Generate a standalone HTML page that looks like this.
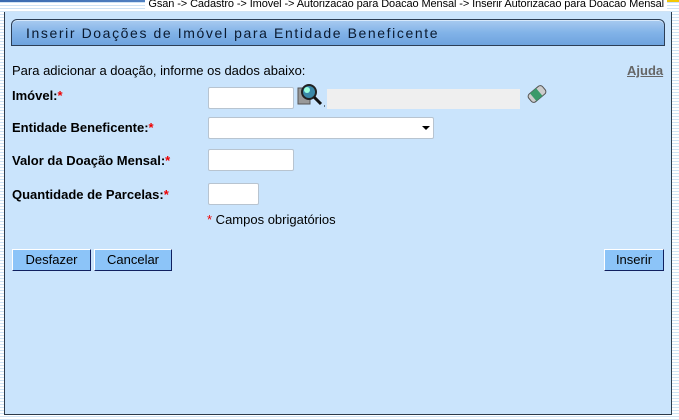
<!DOCTYPE html>
<html><head><meta charset="utf-8"><style>
body{margin:0;width:679px;height:420px;overflow:hidden;font-family:"Liberation Sans",Arial,sans-serif;font-size:12px;color:#000;
background:repeating-linear-gradient(#fff 0 2px,#cfe3f5 2px 3px);}
.crumb{position:absolute;right:12px;top:-1px;font-size:11px;line-height:11px;background:#fff;padding:0 3px;letter-spacing:-0.1px}
.topline{position:absolute;left:0;top:0;width:679px;height:2px;background:linear-gradient(90deg,#3a6ab0,#7aa8e0 60%,#f5c800)}
.panel{position:absolute;left:4px;top:12px;width:666px;height:402px;background:#cae4fc;border:1px solid #2c3a4a;border-top:none}
.title{position:absolute;left:6px;top:7px;width:652px;height:25px;border:1px solid #2c3e56;border-radius:6px 6px 0 0;
background:linear-gradient(#a9cbf0,#82b3e8 50%,#6ea3de);box-shadow:inset 0 1px 0 #d6e8fb;}
.title span{position:absolute;left:14px;top:5px;font-size:14px;letter-spacing:1.6px;color:#0a1a30}
.abs{position:absolute}
.lbl{font-weight:bold;font-size:13px}
.r{color:#e00}
.inp{position:absolute;background:#fff;border:1px solid #b8c4d0;border-radius:2px;height:22px;box-sizing:border-box}
.btn{position:absolute;height:22px;box-sizing:border-box;background:#8cc4f8;border:1px solid;border-color:#fff #102060 #102060 #fff;font-size:13px;text-align:center;line-height:20px}
</style></head><body>
<div class="topline"></div>
<div class="panel">
<div class="title"><span>Inserir Doações de Imóvel para Entidade Beneficente</span></div>
<div class="abs" style="left:7px;top:51px;font-size:13px">Para adicionar a doação, informe os dados abaixo:</div>
<div class="abs" style="left:622px;top:51px;font-size:13px;font-weight:bold;color:#666;text-decoration:underline">Ajuda</div>
<div class="abs lbl" style="left:7px;top:76px">Imóvel:<span class="r">*</span></div>
<div class="inp" style="left:203px;top:75px;width:86px"></div>
<svg class="abs" style="left:292px;top:71px" width="28" height="24" viewBox="0 0 28 24">
<rect x="1" y="5" width="12" height="16" fill="#999" stroke="#555"/>
<circle cx="12" cy="9" r="7" fill="#3a88a8" stroke="#222" stroke-width="2"/>
<circle cx="10" cy="7" r="3" fill="#9fd"/>
<line x1="17" y1="14" x2="24" y2="21" stroke="#111" stroke-width="3"/>
<line x1="27" y1="23" x2="28" y2="23" stroke="#000"/>
</svg>
<div class="abs" style="left:322px;top:77px;width:193px;height:20px;background:#efefef"></div>
<svg class="abs" style="left:520px;top:70px" width="24" height="24" viewBox="0 0 24 24">
<g transform="rotate(-40 12 12)"><rect x="3" y="7" width="18" height="10" rx="3" fill="#ccc" stroke="#555"/><rect x="7" y="7" width="8" height="10" fill="#3a9a6a"/></g>
</svg>
<div class="abs lbl" style="left:7px;top:108px">Entidade Beneficente:<span class="r">*</span></div>
<div class="inp" style="left:203px;top:105px;width:226px"></div>
<div class="abs" style="left:417px;top:114px;width:0;height:0;border-left:4px solid transparent;border-right:4px solid transparent;border-top:4px solid #000"></div>
<div class="abs lbl" style="left:7px;top:141px">Valor da Doação Mensal:<span class="r">*</span></div>
<div class="inp" style="left:203px;top:137px;width:86px"></div>
<div class="abs lbl" style="left:7px;top:175px">Quantidade de Parcelas:<span class="r">*</span></div>
<div class="inp" style="left:203px;top:171px;width:51px"></div>
<div class="abs" style="left:202px;top:200px;font-size:13px"><span class="r">*</span> Campos obrigatórios</div>
<div class="btn" style="left:7px;top:237px;width:79px">Desfazer</div>
<div class="btn" style="left:89px;top:237px;width:78px">Cancelar</div>
<div class="btn" style="left:599px;top:237px;width:60px">Inserir</div>
</div>
<div class="crumb">Gsan -&gt; Cadastro -&gt; Imovel -&gt; Autorizacao para Doacao Mensal -&gt; Inserir Autorizacao para Doacao Mensal</div>
</body></html>
